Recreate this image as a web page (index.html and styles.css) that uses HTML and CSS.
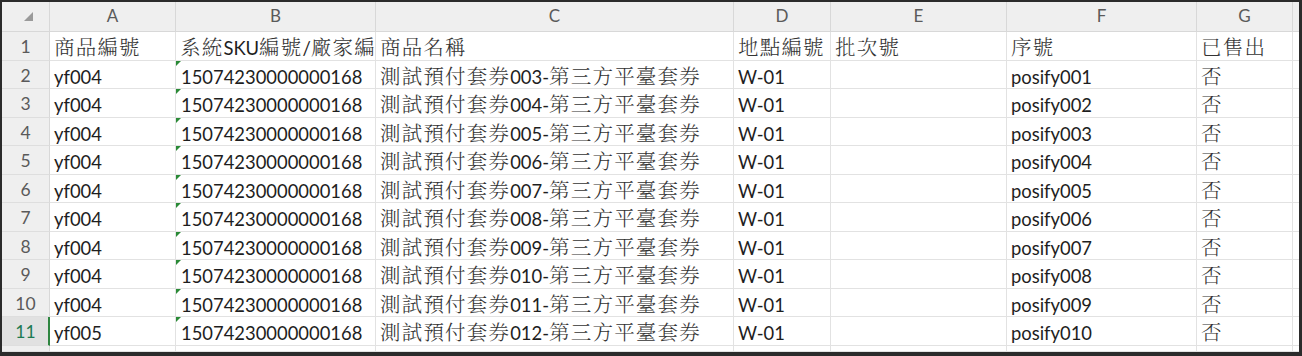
FILE: index.html
```html
<!DOCTYPE html>
<html lang="zh-Hant">
<head>
<meta charset="utf-8">
<title>Sheet</title>
<link rel="stylesheet" href="styles.css">
</head>
<body>
<div class="frame">
  <div class="sheet">
    <div class="corner"><svg width="10" height="9" viewBox="0 0 10 9"><polygon points="10,0 10,9 1,9" fill="#9a9a9a"/></svg></div>
    <div class="ch">A</div><div class="ch">B</div><div class="ch">C</div><div class="ch">D</div><div class="ch">E</div><div class="ch">F</div><div class="ch">G</div><div class="ch"></div>

    <div class="rh">1</div>
    <div class="c"><span class="zh">商品編號</span></div>
    <div class="c"><span class="zh">系統</span>SKU<span class="zh">編號</span>/<span class="zh">廠家編</span></div>
    <div class="c"><span class="zh">商品名稱</span></div>
    <div class="c"><span class="zh">地點編號</span></div>
    <div class="c"><span class="zh">批次號</span></div>
    <div class="c"><span class="zh">序號</span></div>
    <div class="c"><span class="zh">已售出</span></div>
    <div class="c"></div>

    <div class="rh">2</div>
    <div class="c">yf004</div><div class="c num">15074230000000168</div>
    <div class="c"><span class="zh">測試預付套券</span>003-<span class="zh">第三方平臺套券</span></div>
    <div class="c">W-01</div><div class="c"></div><div class="c">posify001</div><div class="c"><span class="zh">否</span></div><div class="c"></div>

    <div class="rh">3</div>
    <div class="c">yf004</div><div class="c num">15074230000000168</div>
    <div class="c"><span class="zh">測試預付套券</span>004-<span class="zh">第三方平臺套券</span></div>
    <div class="c">W-01</div><div class="c"></div><div class="c">posify002</div><div class="c"><span class="zh">否</span></div><div class="c"></div>

    <div class="rh">4</div>
    <div class="c">yf004</div><div class="c num">15074230000000168</div>
    <div class="c"><span class="zh">測試預付套券</span>005-<span class="zh">第三方平臺套券</span></div>
    <div class="c">W-01</div><div class="c"></div><div class="c">posify003</div><div class="c"><span class="zh">否</span></div><div class="c"></div>

    <div class="rh">5</div>
    <div class="c">yf004</div><div class="c num">15074230000000168</div>
    <div class="c"><span class="zh">測試預付套券</span>006-<span class="zh">第三方平臺套券</span></div>
    <div class="c">W-01</div><div class="c"></div><div class="c">posify004</div><div class="c"><span class="zh">否</span></div><div class="c"></div>

    <div class="rh">6</div>
    <div class="c">yf004</div><div class="c num">15074230000000168</div>
    <div class="c"><span class="zh">測試預付套券</span>007-<span class="zh">第三方平臺套券</span></div>
    <div class="c">W-01</div><div class="c"></div><div class="c">posify005</div><div class="c"><span class="zh">否</span></div><div class="c"></div>

    <div class="rh">7</div>
    <div class="c">yf004</div><div class="c num">15074230000000168</div>
    <div class="c"><span class="zh">測試預付套券</span>008-<span class="zh">第三方平臺套券</span></div>
    <div class="c">W-01</div><div class="c"></div><div class="c">posify006</div><div class="c"><span class="zh">否</span></div><div class="c"></div>

    <div class="rh">8</div>
    <div class="c">yf004</div><div class="c num">15074230000000168</div>
    <div class="c"><span class="zh">測試預付套券</span>009-<span class="zh">第三方平臺套券</span></div>
    <div class="c">W-01</div><div class="c"></div><div class="c">posify007</div><div class="c"><span class="zh">否</span></div><div class="c"></div>

    <div class="rh">9</div>
    <div class="c">yf004</div><div class="c num">15074230000000168</div>
    <div class="c"><span class="zh">測試預付套券</span>010-<span class="zh">第三方平臺套券</span></div>
    <div class="c">W-01</div><div class="c"></div><div class="c">posify008</div><div class="c"><span class="zh">否</span></div><div class="c"></div>

    <div class="rh">10</div>
    <div class="c">yf004</div><div class="c num">15074230000000168</div>
    <div class="c"><span class="zh">測試預付套券</span>011-<span class="zh">第三方平臺套券</span></div>
    <div class="c">W-01</div><div class="c"></div><div class="c">posify009</div><div class="c"><span class="zh">否</span></div><div class="c"></div>

    <div class="rh active">11</div>
    <div class="c">yf005</div><div class="c num">15074230000000168</div>
    <div class="c"><span class="zh">測試預付套券</span>012-<span class="zh">第三方平臺套券</span></div>
    <div class="c">W-01</div><div class="c"></div><div class="c">posify010</div><div class="c"><span class="zh">否</span></div><div class="c"></div>

    <div class="rh"></div>
    <div class="c"></div><div class="c"></div><div class="c"></div><div class="c"></div><div class="c"></div><div class="c"></div><div class="c"></div><div class="c"></div>
  </div>
</div>
</body>
</html>
```

FILE: styles.css
```css
* { box-sizing: border-box; }

html, body {
  margin: 0;
  padding: 0;
  background: #2b2b2b;
}

.frame {
  width: 1302px;
  height: 356px;
  padding: 2px 3px 4px 2px;
  background: #2b2b2b;
}

.sheet {
  width: 1297px;
  height: 350px;
  overflow: hidden;
  background: #ffffff;
  display: grid;
  grid-template-columns: 48px 126px 200px 358px 97px 176px 190px 96px 20px;
  grid-template-rows: 30px repeat(11, 28.55px) 1fr;
  font-family: "Lato", "Liberation Sans", sans-serif;
  font-size: 18.4px;
  color: #1e1e1e;
}

.corner {
  background: #efefef;
  border-right: 1px solid #d8d8d8;
  border-bottom: 1px solid #d8d8d8;
  display: flex;
  align-items: flex-start;
  justify-content: flex-end;
  padding: 10px 16px 0 0;
}

.ch {
  background: #efefef;
  border-right: 1px solid #d8d8d8;
  border-bottom: 1px solid #d8d8d8;
  text-align: center;
  font-size: 17px;
  line-height: 22px;
  padding-top: 3px;
  color: #5a5a5a;
}

.rh {
  background: #efefef;
  border-right: 1px solid #d8d8d8;
  border-bottom: 1px solid #dedede;
  text-align: center;
  font-size: 17.5px;
  line-height: 22px;
  padding-top: 4px;
  color: #5a5a5a;
}

.rh.active {
  background: #e1e1e1;
  color: #1d7a52;
  border-right: 2px solid #2e8540;
  padding-left: 1px;
}

.c {
  position: relative;
  border-right: 1px solid #e2e2e2;
  border-bottom: 1px solid #e2e2e2;
  padding: 5px 0 0 4px;
  line-height: 22px;
  white-space: nowrap;
  overflow: hidden;
}

.num { padding-left: 5px; }

.num::before {
  content: "";
  position: absolute;
  top: 0;
  left: 0;
  border-top: 5px solid #2a8a36;
  border-right: 5px solid transparent;
}

.zh {
  font-family: "Noto Serif CJK TC", "Noto Sans CJK TC", sans-serif;
  font-size: 20.5px;
  font-weight: 300;
  letter-spacing: 1.2px;
  line-height: 0;
  color: #333;
}
```
